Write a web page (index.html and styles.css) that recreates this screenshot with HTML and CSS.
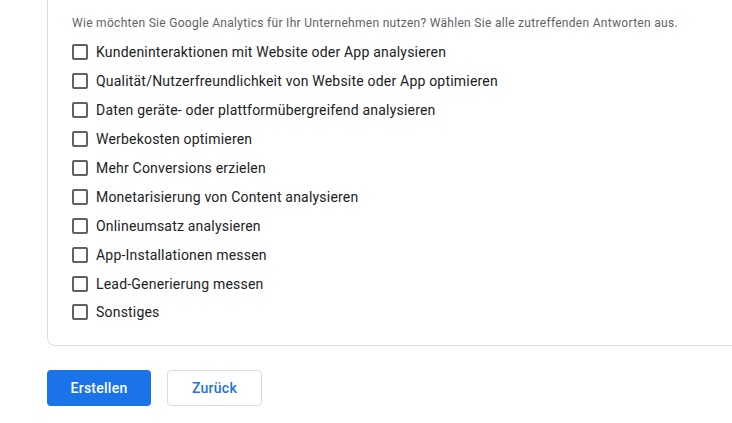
FILE: index.html
```html
<!DOCTYPE html>
<html lang="de">
<head>
    <meta charset="UTF-8">
    <title>Google Analytics – Unternehmensinformationen</title>
    <link rel="stylesheet" href="styles.css">
</head>
<body>
<div class="page">
    <div class="card">
        <p class="hint">Wie möchten Sie Google Analytics für Ihr Unternehmen nutzen? Wählen Sie alle zutreffenden Antworten aus.</p>
        <ul class="options">
            <li><span class="box"></span>Kundeninteraktionen mit Website oder App analysieren</li>
            <li><span class="box"></span>Qualität/Nutzerfreundlichkeit von Website oder App optimieren</li>
            <li><span class="box"></span>Daten geräte- oder plattformübergreifend analysieren</li>
            <li><span class="box"></span>Werbekosten optimieren</li>
            <li><span class="box"></span>Mehr Conversions erzielen</li>
            <li><span class="box"></span>Monetarisierung von Content analysieren</li>
            <li><span class="box"></span>Onlineumsatz analysieren</li>
            <li><span class="box"></span>App-Installationen messen</li>
            <li><span class="box"></span>Lead-Generierung messen</li>
            <li><span class="box"></span>Sonstiges</li>
        </ul>
    </div>

    <div class="actions">
        <button class="btn primary">Erstellen</button>
        <button class="btn secondary">Zurück</button>
    </div>
</div>
</body>
</html>
```

FILE: styles.css
```css
body {
    margin: 0;
    font-family: Roboto, 'Liberation Sans', Arial, sans-serif;
    background-color: #fff;
    color: #202124;
    overflow: hidden;
}
.page {
    padding-left: 47px;
    overflow: hidden;
}
.card {
    margin-top: -20px;
    width: 720px;
    border: 1px solid #dadce0;
    border-radius: 8px;
    padding: 34px 0 18px 24px;
}
.hint {
    margin: 0 0 7px 0;
    font-size: 12px;
    line-height: 16px;
    color: #5f6368;
    letter-spacing: 0.3px;
}
.options {
    list-style: none;
    margin: 0;
    padding: 0;
}
.options li {
    display: flex;
    align-items: center;
    height: 28.9px;
    font-size: 14px;
    letter-spacing: 0.2px;
    color: #202124;
}
.box {
    width: 16px;
    height: 16px;
    box-sizing: border-box;
    border: 2px solid #5f6368;
    border-radius: 2px;
    margin-right: 8px;
}
.actions {
    display: flex;
    gap: 16px;
    margin-top: 24px;
}
.btn {
    height: 36px;
    border-radius: 4px;
    font-family: Roboto, 'Liberation Sans', Arial, sans-serif;
    font-size: 14px;
    font-weight: 500;
    letter-spacing: 0.25px;
    cursor: pointer;
}
.primary {
    width: 104px;
    background-color: #1a73e8;
    border: none;
    color: #fff;
}
.secondary {
    width: 95px;
    background-color: #fff;
    border: 1px solid #dadce0;
    color: #1a73e8;
}
```
